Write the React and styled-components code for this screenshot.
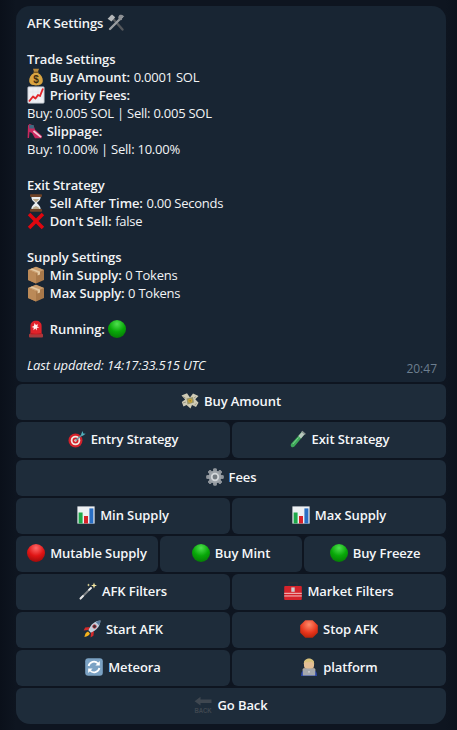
import React from "react";
import styled, { createGlobalStyle } from "styled-components";

const Global = createGlobalStyle`
  html, body { margin: 0; padding: 0; background: #0c131d; }
  body { font-family: "Open Sans", "Noto Sans", sans-serif; font-size: 13px; color: #f5f5f5; }
`;

const Page = styled.div`
  width: 457px;
  height: 730px;
  box-sizing: border-box;
  padding: 6px 11px 6px 16px;
  display: flex;
  flex-direction: column;
  gap: 2px;
  overflow: hidden;
  background: linear-gradient(90deg, #0a101a 0, #0e1520 16px, #0e1520 446px, #0b121c 457px);
`;

const Bubble = styled.div`
  position: relative;
  box-sizing: border-box;
  height: 376px;
  padding: 8px 11px 0;
  background: #182533;
  border-radius: 14px 14px 6px 6px;
`;

const Line = styled.div`
  display: flex;
  align-items: center;
  height: 18px;
  line-height: 18px;
  white-space: pre;
  color: #f2f4f6;
  letter-spacing: -0.24px;
`;

const Spacer = styled.div`
  height: 18px;
`;

const Strong = styled.span`
  font-weight: 600;
  letter-spacing: -0.1px;
  margin-left: ${(p) => (p.$afterIcon ? "1.5px" : "0")};
  margin-right: ${(p) => (p.$afterIcon ? "0.5px" : "0")};
`;

const Italic = styled.span`
  font-style: italic;
  letter-spacing: -0.12px;
  color: #f2f4f6;
`;

const Time = styled.span`
  position: absolute;
  right: 9px;
  bottom: 5px;
  font-size: 12px;
  line-height: 16px;
  letter-spacing: 0;
  color: #6d7f8f;
`;

const Keyboard = styled.div`
  display: flex;
  flex-direction: column;
  gap: 2px;
`;

const Row = styled.div`
  display: flex;
  gap: 2px;
`;

const Button = styled.button`
  flex: 1 1 0;
  min-width: 0;
  height: 36px;
  padding: 0 0 2px;
  border: 0;
  display: flex;
  align-items: center;
  justify-content: center;
  gap: 5px;
  font-family: inherit;
  font-size: 13px;
  font-weight: 600;
  letter-spacing: -0.08px;
  color: #f5f7f9;
  background: #1e2c3a;
  border-radius: ${(p) => (p.$last ? "6px 6px 14px 14px" : "6px")};
  white-space: nowrap;
`;

const EmojiBox = styled.svg`
  flex: none;
  width: ${(p) => p.$w || 18}px;
  height: 18px;
  display: block;
`;

const Em = ({ children, w, box = "0 0 18 18" }) => (
  <EmojiBox viewBox={box} $w={w} aria-hidden="true">{children}</EmojiBox>
);

const Circle = ({ c }) => {
  const map = {
    green: ["#4fe04f", "#08a808", "#067a06"],
    red: ["#ff6a6a", "#e01515", "#9c0a0a"],
  }[c];
  return (
    <Em>
      <defs>
        <radialGradient id={`ball-${c}`} cx="50%" cy="22%" r="80%">
          <stop offset="0" stopColor={map[0]} />
          <stop offset="0.55" stopColor={map[1]} />
          <stop offset="1" stopColor={map[2]} />
        </radialGradient>
      </defs>
      <circle cx="9" cy="9" r="9" fill={`url(#ball-${c})`} />
    </Em>
  );
};

const Tools = () => (
  <Em>
    <path d="M4 2.500 15.500 15.500" stroke="#55585c" strokeWidth="2.400" strokeLinecap="round" />
    <path d="M15 3 3 15" stroke="#9a9da0" strokeWidth="2.400" strokeLinecap="round" />
    <path d="M.6 4.800 5 .6l3.200 2.600-3.700 4.400z" fill="#b5b8ba" />
    <path d="M13 .8c2-.6 3.800.4 4.300 2.200l-2.400-.3-1 1.600 1.400 1.400c-1.600 1-3.600.2-4-1.600-.2-1.200.6-2.800 1.700-3.300z" fill="#8d9094" />
  </Em>
);

const MoneyBag = () => (
  <Em>
    <path d="M6 .8h6l-1.300 3.400H7.200z" fill="#b98a3c" />
    <rect x="6.400" y="3.600" width="5.200" height="1.400" fill="#7c5a22" />
    <path d="M7 5C3.600 6.600 2 10 2.200 13c.2 3.200 2.800 4.400 6.800 4.400s6.600-1.200 6.800-4.400C16 10 14.400 6.600 11 5z" fill="#d9a441" />
    <text x="9" y="14.800" textAnchor="middle" fontFamily="Liberation Sans, sans-serif" fontWeight="700" fontSize="10" fill="#3f2c10">$</text>
  </Em>
);

const Chart = () => (
  <Em>
    <rect x=".8" y=".8" width="16.400" height="16.400" rx="1" fill="#eef0f4" stroke="#a9b0ba" strokeWidth=".7" />
    <path d="M1.500 6h15M1.500 11h15M6 1.500v15M11 1.500v15" stroke="#dfe3e8" strokeWidth=".5" />
    <path d="M2 15.500 6 10.500l2.500 2L11 9l2 1 3-7.500" fill="none" stroke="#e3262b" strokeWidth="1.900" strokeLinejoin="round" />
  </Em>
);

const Heel = () => (
  <Em w={15} box="1 0 15 18">
    <path d="M2 3.500 3.500 2l4 1.500 1.500 4 7 6.500-.3 2.200H9L6 11l-2.500-1L3 16H1.600z" fill="#c8285e" />
    <path d="M3 3h4.500l.8 3.600H3.400z" fill="#3d6a80" />
    <path d="M7.500 9 15 15.200" stroke="#f3c6d6" strokeWidth="1.700" />
  </Em>
);

const Hourglass = () => (
  <Em>
    <rect x="3" y=".3" width="12" height="2.600" rx=".8" fill="#6f4327" />
    <rect x="3" y="15.100" width="12" height="2.600" rx=".8" fill="#6f4327" />
    <path d="M4.400 2.900h9.200C13.600 6.500 10.600 7.600 10 9c.6 1.400 3.600 2.500 3.600 6.100H4.400C4.400 11.500 7.400 10.400 8 9c-.6-1.400-3.600-2.500-3.600-6.100z" fill="#e9edf0" />
    <path d="M5.800 5h6.400c-.8 1.600-2.600 2.600-3.200 3.600C8.400 7.600 6.600 6.600 5.800 5zM5.400 15c.6-1.800 2.600-2.400 3.600-3 1 .6 3 1.200 3.600 3z" fill="#b9a98a" />
  </Em>
);

const Cross = () => (
  <Em>
    <path d="M.8 3.300 3.300.8 9 6.500 14.700.8l2.500 2.500L11.500 9l5.700 5.700-2.500 2.500L9 11.500l-5.700 5.700-2.500-2.500L6.500 9z" fill="#e0060f" />
  </Em>
);

const Package = () => (
  <Em>
    <path d="M9 .8 17 4v10l-8 3.400L1 14V4z" fill="#a9794a" />
    <path d="M9 .8 17 4 9 7.400 1 4z" fill="#c99c6c" />
    <path d="M9 7.400v10L1 14V4z" fill="#bb8a58" />
    <path d="M5 2.400 13 5.600v3l-2.400 1V6.400L2.800 3.200z" fill="#e3c9a3" />
  </Em>
);

const Siren = () => (
  <Em>
    <rect x="2" y="13.800" width="14" height="3.600" rx="1" fill="#a8393c" />
    <path d="M3.400 14.200V6C3.400 2.800 5.800.8 9 .8s5.600 2 5.600 5.200v8.200z" fill="#e1222a" />
    <path d="M3.800 13c3 1 7.400 1 10.400 0v1.200H3.800z" fill="#b8181f" />
    <path d="M7.600 3l1.300 2 2.200-.8-.9 2.200 2 1.200-2.400.4.200 2.400L8.400 8.600 6.400 10.200l.4-2.400-2.200-.8 2.200-1z" fill="#fff3ef" />
  </Em>
);

const MoneyWings = () => (
  <Em>
    <path d="M.5 3.500 6 1.200l3 4.200 3-3.800 5.500 2.300-3.200 3.400 3.200 3.400-2.500 4.200-4-2-1.500 3.700-4-3.600-3 1.600L.8 10l3.400-2.600z" fill="#cfcbb6" />
    <path d="M5.500 6.500 12 5l1 5.500-6.500 2z" fill="#9a9568" />
    <circle cx="9.200" cy="8.700" r="2" fill="#cfa631" />
    <circle cx="9.200" cy="8.700" r=".8" fill="#8a7a3a" />
    <path d="M1.500 4.500l3 1.500M2 11l3-1M13.500 13l2-1.500M15 4.500l-2 1.500" stroke="#8f8c79" strokeWidth=".8" />
  </Em>
);

const Dart = () => (
  <Em>
    <circle cx="7.500" cy="10.500" r="7" fill="#d3202a" />
    <circle cx="7.500" cy="10.500" r="4.800" fill="#f2e6e0" />
    <circle cx="7.500" cy="10.500" r="3" fill="#d3202a" />
    <circle cx="7.500" cy="10.500" r="1.200" fill="#f2e6e0" />
    <path d="M7.500 10.500 14 5" stroke="#5c9aa6" strokeWidth="1.300" />
    <path d="M13 4.500 14.500 1l.8 2.400 2.400.3-3.200 2.400z" fill="#4fb0bd" />
  </Em>
);

const TestTube = () => (
  <Em>
    <path d="M13 1.800 15.600 4.200 5.400 16.400c-.9 1-2.300 1.100-3.100.3-.8-.8-.8-2.200.1-3.200z" fill="#3fa85a" />
    <path d="M13 1.800 15.600 4.200 12 8.500 9.300 6z" fill="#b9c6bd" />
    <path d="M12.300 1.800 15.800 5 16.800 3.800 13.400.8z" fill="#8a9390" />
    <path d="M3.800 14 9.500 7.500" stroke="#8fe0a0" strokeWidth=".8" />
  </Em>
);

const Gear = () => (
  <Em>
    <g fill="#8f959b">
      {[0, 45, 90, 135, 180, 225, 270, 315].map((a) => (
        <rect key={a} x="7.300" y=".4" width="3.400" height="17.200" rx=".8" transform={`rotate(${a} 9 9)`} />
      ))}
    </g>
    <circle cx="9" cy="9" r="6.400" fill="#9ca2a8" />
    <circle cx="9" cy="9" r="4.200" fill="#d3d7da" />
    <circle cx="9" cy="9" r="2.400" fill="#737a80" />
  </Em>
);

const Bars = () => (
  <Em>
    <rect x=".4" y=".4" width="17.200" height="17.200" fill="#eef1f4" />
    <rect x="1.600" y="6.500" width="4" height="11" fill="#1fa84a" />
    <rect x="7" y="10" width="4" height="7.500" fill="#d8232a" />
    <rect x="12.400" y="2.400" width="4" height="15.100" fill="#2a6fc4" />
  </Em>
);

const Wand = () => (
  <Em>
    <path d="M1.500 16.500 12 6" stroke="#7f8386" strokeWidth="1.800" strokeLinecap="round" />
    <path d="M1.500 16.500 4 14" stroke="#e8e8e8" strokeWidth="1.800" strokeLinecap="round" />
    <path d="M10 7.800 12 6" stroke="#eeeeee" strokeWidth="1.800" strokeLinecap="round" />
    <path d="M15 .5l.8 2.200 2.200.8-2.200.8-.8 2.200-.8-2.200-2.200-.8 2.200-.8z" fill="#f5e6a0" />
    <path d="M9.500 1.500l.4 1.100 1.100.4-1.100.4-.4 1.100-.4-1.100L8 3l1.100-.4z" fill="#f5e6a0" />
  </Em>
);

const Toolbox = () => (
  <Em>
    <path d="M5 4.500V.8h8V4.500" fill="none" stroke="#2f3134" strokeWidth="1.200" />
    <rect x=".2" y="4" width="17.600" height="14" rx="1" fill="#d5232b" />
    <rect x=".2" y="10.800" width="17.600" height="1.100" fill="#f0b8b8" />
    <rect x=".2" y="13.400" width="17.600" height="1.100" fill="#f0b8b8" />
    <rect x="7.300" y="5.400" width="3.400" height="4.400" fill="#c9cccf" />
  </Em>
);

const Rocket = () => (
  <Em>
    <path d="M17.500.6c-4.600.2-8.300 2.600-10.800 7L5.200 10l2.900 2.900 2.400-1.500c4.400-2.500 6.800-6.200 7-10.800z" fill="#c3d0dc" />
    <path d="M17.500.6c-1.800.1-3.400.5-4.900 1.300l3.600 3.600c.8-1.500 1.200-3.100 1.300-4.900z" fill="#5c7ea0" />
    <circle cx="11.500" cy="6.500" r="1.800" fill="#36333a" stroke="#d02a35" strokeWidth=".7" />
    <path d="M7 7 2.200 7.600 .6 10.400 5.200 10zM11 11 10.400 15.800 7.600 17.400 8 12.800z" fill="#d32a2a" />
    <path d="M5 11.500C3 12 2 14 1.400 17c2.800-.6 5-1.600 5.500-3.600z" fill="#f6b21c" />
  </Em>
);

const StopSign = () => (
  <Em>
    <defs>
      <radialGradient id="stop-fill" cx="50%" cy="25%" r="80%">
        <stop offset="0" stopColor="#ff8a6a" />
        <stop offset="0.6" stopColor="#e8351c" />
        <stop offset="1" stopColor="#b02208" />
      </radialGradient>
    </defs>
    <path d="M5.300.2h7.400L17.800 5.300v7.400L12.700 17.800H5.300L.2 12.700V5.300z" fill="url(#stop-fill)" />
  </Em>
);

const Arrows = () => (
  <Em>
    <rect x=".2" y=".2" width="17.600" height="17.600" rx="3" fill="#7ba2c4" />
    <path d="M3.600 8a5.500 5.500 0 0 1 9.400-2.500" fill="none" stroke="#fff" strokeWidth="1.800" />
    <path d="M14.800 3v4.400h-4.400z" fill="#fff" />
    <path d="M14.400 10a5.500 5.500 0 0 1-9.400 2.500" fill="none" stroke="#fff" strokeWidth="1.800" />
    <path d="M3.200 15v-4.400h4.400z" fill="#fff" />
  </Em>
);

const Technologist = () => (
  <Em>
    <path d="M1 18c0-4 1.500-6 4-6.500h8c2.500.5 4 2.500 4 6.500z" fill="#2b46a8" />
    <rect x="4" y="1.500" width="10" height="9.500" rx="3.500" fill="#e3bf95" />
    <path d="M3.800 6.500C3.500 2.500 6 .4 9 .4s5.500 2.100 5.200 6.100c-1-1.800-2-2.600-3-2.800-2 .6-5 .8-5.800.4-.8.600-1.400 1.400-1.600 2.400z" fill="#d9c27c" />
    <path d="M2.800 11c1-.8 1.800-.8 2.600-.6h7.200c.8-.2 1.600-.2 2.600.6V13H2.800z" fill="#d9b48a" />
    <rect x="2.800" y="10.400" width="12.400" height="7.200" rx=".6" fill="#a5a8ac" />
    <rect x="8.300" y="13.400" width="1.400" height="1" fill="#f0f0f0" />
  </Em>
);

const BackMark = styled.text`
  font-family: "Liberation Sans", sans-serif;
  font-weight: 700;
  font-size: 6.5px;
  fill: #3f4750;
`;

const Back = () => (
  <Em>
    <path d="M.6 5.200 6.500.8v2.600h11v3.600h-11v2.600z" fill="#3f4750" />
    <BackMark x="9" y="16.800" textAnchor="middle" textLength="17" lengthAdjust="spacingAndGlyphs">BACK</BackMark>
  </Em>
);

const KV = ({ icon, label, value }) => (
  <Line>
    {icon}
    <Strong $afterIcon>{` ${label}:`}</Strong>
    {value ? ` ${value}` : null}
  </Line>
);

const keyboard = [
  [{ i: <MoneyWings />, t: "Buy Amount" }],
  [{ i: <Dart />, t: "Entry Strategy" }, { i: <TestTube />, t: "Exit Strategy" }],
  [{ i: <Gear />, t: "Fees" }],
  [{ i: <Bars />, t: "Min Supply" }, { i: <Bars />, t: "Max Supply" }],
  [{ i: <Circle c="red" />, t: "Mutable Supply" }, { i: <Circle c="green" />, t: "Buy Mint" }, { i: <Circle c="green" />, t: "Buy Freeze" }],
  [{ i: <Wand />, t: "AFK Filters" }, { i: <Toolbox />, t: "Market Filters" }],
  [{ i: <Rocket />, t: "Start AFK" }, { i: <StopSign />, t: "Stop AFK" }],
  [{ i: <Arrows />, t: "Meteora" }, { i: <Technologist />, t: "platform" }],
  [{ i: <Back />, t: "Go Back", last: true }],
];

export default function App() {
  return (
    <Page>
      <Global />
      <Bubble>
        <Line><Strong>{"AFK Settings "}</Strong><Tools /></Line>
        <Spacer />
        <Line><Strong>Trade Settings</Strong></Line>
        <KV icon={<MoneyBag />} label="Buy Amount" value="0.0001 SOL" />
        <KV icon={<Chart />} label="Priority Fees" />
        <Line>Buy: 0.005 SOL | Sell: 0.005 SOL</Line>
        <KV icon={<Heel />} label="Slippage" />
        <Line>Buy: 10.00% | Sell: 10.00%</Line>
        <Spacer />
        <Line><Strong>Exit Strategy</Strong></Line>
        <KV icon={<Hourglass />} label="Sell After Time" value="0.00 Seconds" />
        <KV icon={<Cross />} label="Don't Sell" value="false" />
        <Spacer />
        <Line><Strong>Supply Settings</Strong></Line>
        <KV icon={<Package />} label="Min Supply" value="0 Tokens" />
        <KV icon={<Package />} label="Max Supply" value="0 Tokens" />
        <Spacer />
        <Line>
          <Siren />
          <Strong $afterIcon>{" Running: "}</Strong>
          <Circle c="green" />
        </Line>
        <Spacer />
        <Line><Italic>Last updated: 14:17:33.515 UTC</Italic></Line>
        <Time>20:47</Time>
      </Bubble>
      <Keyboard>
        {keyboard.map((row, r) => (
          <Row key={r}>
            {row.map((b) => (
              <Button key={b.t} $last={b.last}>
                {b.i}
                <span>{b.t}</span>
              </Button>
            ))}
          </Row>
        ))}
      </Keyboard>
    </Page>
  );
}
